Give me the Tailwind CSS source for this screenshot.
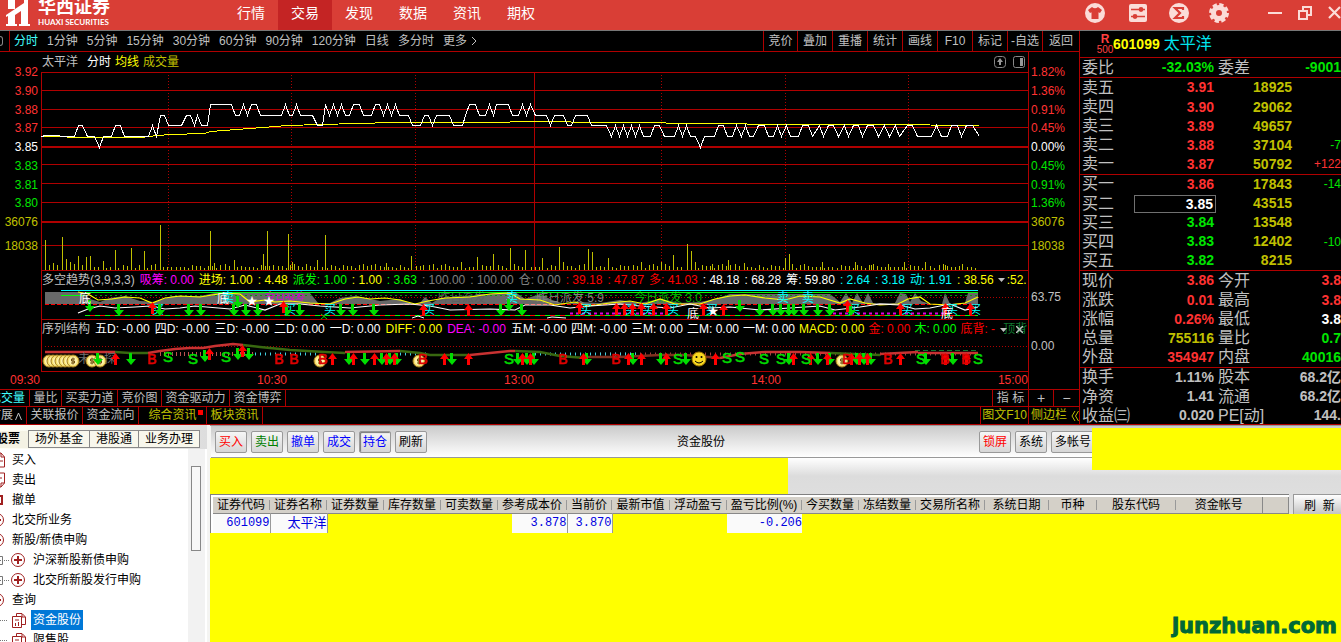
<!DOCTYPE html>
<html lang="zh-CN">
<head>
<meta charset="utf-8">
<title>华西证券</title>
<script src="https://cdn.jsdelivr.net/npm/@tailwindcss/browser@4"></script>
</head>
<body class="flex h-screen flex-col overflow-hidden bg-black font-['Liberation_Sans','Noto_Sans_CJK_SC',sans-serif] text-xs text-[#c0c0c0]">

<!-- title bar -->
<header class="flex h-[31px] shrink-0 items-start overflow-hidden border-b border-[#777] bg-[#d93e36] text-white">
  <div class="flex w-[224px] shrink-0 gap-2 pl-1.5">
    <svg class="h-[26px] w-6" viewBox="0 0 24 26" fill="#fff"><path d="M2 0H9V9L18 3V0H22V24H24V26H13V24H15V11L9 15V24H11V26H0V24H2V16L0 17V15L9 9H2Z"/></svg>
    <div class="-mt-1 flex flex-col">
      <span class="font-['Liberation_Serif','Noto_Sans_CJK_SC',serif] text-lg leading-[22px] font-bold">华西证券</span>
      <span class="font-[Lato,sans-serif] text-[8px] leading-2 font-bold">HUAXI SECURITIES</span>
    </div>
  </div>
  <nav class="flex flex-1 text-sm leading-[27px]">
    <a href="#" class="h-[30px] w-[54px] text-center">行情</a>
    <a href="#" class="h-[30px] w-[54px] bg-[#c42424] text-center">交易</a>
    <a href="#" class="h-[30px] w-[54px] text-center">发现</a>
    <a href="#" class="h-[30px] w-[54px] text-center">数据</a>
    <a href="#" class="h-[30px] w-[54px] text-center">资讯</a>
    <a href="#" class="h-[30px] w-[54px] text-center">期权</a>
  </nav>
  <div class="flex h-[25px] shrink-0 items-center text-[#fbdcd8]">
    <button aria-label="皮肤" class="mr-6 size-5"><svg viewBox="0 0 20 20"><circle cx="10" cy="10" r="10" fill="currentColor"/><path d="M7 4Q10 6.500 13 4L17 7L15 10L13.500 9.300V16H6.500V9.300L5 10L3 7Z" fill="#d93e36"/></svg></button>
    <button aria-label="设置项" class="mr-[22px] size-[18px]"><svg viewBox="0 0 18 18"><rect width="18" height="18" rx="2" fill="currentColor"/><path d="M2 5.500H16M2 12.500H16" stroke="#d93e36" stroke-width="1.500"/><circle cx="12" cy="5.500" r="2.400" fill="#d93e36"/><circle cx="6" cy="12.500" r="2.400" fill="#d93e36"/></svg></button>
    <button aria-label="统计" class="mr-5 size-5"><svg viewBox="0 0 20 20"><circle cx="10" cy="10" r="10" fill="currentColor"/><path d="M14 7V5H6L11 10L6 15H14V13" fill="none" stroke="#d93e36" stroke-width="2.200"/></svg></button>
    <button aria-label="系统设置" class="mr-[39px] size-5"><svg viewBox="0 0 20 20"><circle cx="10" cy="10" r="5.500" fill="none" stroke="currentColor" stroke-width="5"/><circle cx="10" cy="10" r="8" fill="none" stroke="currentColor" stroke-width="4" stroke-dasharray="4 2.283"/></svg></button>
    <button aria-label="最小化" class="mr-4 w-[14px]"><svg viewBox="0 0 14 14"><path d="M0 7H14" stroke="currentColor" stroke-width="2"/></svg></button>
    <button aria-label="还原" class="mr-4 w-[14px]"><svg viewBox="0 0 14 14" fill="none" stroke="currentColor" stroke-width="2"><path d="M1 5H9V13H1ZM5 5V1H13V9H9"/></svg></button>
    <button aria-label="关闭" class="w-[13px]"><svg viewBox="0 0 13 13"><path d="M1 1L12 12M12 1L1 12" stroke="currentColor" stroke-width="2.200"/></svg></button>
  </div>
</header>

<main class="flex h-[394px] shrink-0 overflow-hidden border-b border-[#b00000]">
  <section class="flex min-w-0 flex-1 flex-col">
    <!-- period toolbar -->
    <div class="flex h-[21px] shrink-0 items-stretch border-b border-[#b00000] leading-5 whitespace-nowrap">
      <div class="flex w-[10px] shrink-0 items-center border-r border-[#b00000]"><i class="h-2.5 w-[3px] rounded-r-sm border border-l-0 border-[#888]"></i></div>
      <div class="flex flex-1 gap-[9px] pl-1">
        <button class="text-[#40ffff]">分时</button><button>1分钟</button><button>5分钟</button><button>15分钟</button><button>30分钟</button><button>60分钟</button><button>90分钟</button><button>120分钟</button><button>日线</button><button>多分时</button>
        <button class="flex items-center gap-1">更多<svg class="h-2.5 w-1.5" viewBox="0 0 6 10"><path d="M1 1L5 5L1 9" fill="none" stroke="currentColor"/></svg></button>
      </div>
      <button class="w-[34px] border-l border-[#b00000]">竞价</button><button class="w-[35px] border-l border-[#b00000]">叠加</button><button class="w-[35px] border-l border-[#b00000]">重播</button><button class="w-[35px] border-l border-[#b00000]">统计</button><button class="w-[35px] border-l border-[#b00000]">画线</button><button class="w-[35px] border-l border-[#b00000]">F10</button><button class="w-[35px] border-l border-[#b00000]">标记</button><button class="w-[35px] border-l border-[#b00000]">-自选</button><button class="w-[37px] border-l border-[#b00000]">返回</button>
    </div>

    <!-- price and volume -->
    <div class="flex h-[219px] shrink-0">
      <div class="flex w-[41px] shrink-0 flex-col pr-[3px] text-right leading-[18px]">
        <div class="mt-[11px] flex h-[168px] flex-col justify-between text-[#ff3232]">
          <span>3.92</span><span>3.90</span><span>3.88</span><span>3.87</span><span class="text-white">3.85</span><span class="text-[#00e600]">3.83</span><span class="text-[#00e600]">3.81</span><span class="text-[#00e600]">3.80</span><span class="text-[#c0c000]">36076</span>
        </div>
        <span class="mt-1.5 text-[#c0c000]">18038</span>
      </div>
      <div class="relative min-w-0 flex-1">
        <svg id="price" class="absolute inset-0 h-full w-full" viewBox="41 52 988 219" preserveAspectRatio="none" shape-rendering="crispEdges"></svg>
        <div class="relative flex h-5 items-center pr-1 pl-px">
          <span class="mr-[9px]">太平洋</span><span class="mr-1 text-white">分时</span><span class="mr-1 text-[#ffff00]">均线</span><span class="flex-1 text-[#c0c000]">成交量</span>
          <button aria-label="上移" class="mr-[7px] size-3"><svg viewBox="0 0 12 12"><rect x=".5" y=".5" width="11" height="11" rx="3" fill="none" stroke="#888"/><path d="M6 2L9 6H7V9H5V6H3Z" fill="#999"/></svg></button>
          <button aria-label="侧栏" class="size-3"><svg viewBox="0 0 12 12"><rect x=".5" y=".5" width="11" height="11" rx="2" fill="none" stroke="#888"/><path d="M7 2H10V10H7Z" fill="#999"/></svg></button>
        </div>
      </div>
      <div class="flex w-[50px] shrink-0 flex-col pl-[2px] leading-[18px]">
        <div class="mt-[11px] flex h-[168px] flex-col justify-between text-[#ff3232]">
          <span>1.82%</span><span>1.36%</span><span>0.91%</span><span>0.45%</span><span class="text-white">0.00%</span><span class="text-[#00e600]">0.45%</span><span class="text-[#00e600]">0.91%</span><span class="text-[#00e600]">1.36%</span><span class="text-[#c0c000]">36076</span>
        </div>
        <span class="mt-1.5 text-[#c0c000]">18038</span>
      </div>
    </div>

    <!-- trend indicator -->
    <div class="flex h-[49px] shrink-0">
      <div class="w-[41px] shrink-0"></div>
      <div class="relative min-w-0 flex-1 overflow-hidden">
        <svg id="trend" class="absolute inset-0 h-full w-full" viewBox="41 271 988 49" preserveAspectRatio="none"></svg>
        <div class="relative flex h-[18px] items-center gap-[5px] pl-px whitespace-nowrap">
          <span>多空趋势(3,9,3,3)</span><span class="text-[#ff00ff]">吸筹: 0.00</span><span class="text-[#ffff00]">进场: 1.00</span><span class="text-[#ffff00]">: 4.48</span><span class="text-[#00ff00]">派发: 1.00</span><span class="text-[#ffff00]">: 1.00</span><span class="text-[#00ff00]">: 3.63</span><span class="text-[#808080]">: 100.00</span><span class="text-[#808080]">: 100.00</span><span class="text-[#808080]">仓: 0.00</span><span class="text-[#ff0000]">: 39.18</span><span class="text-[#ff0000]">: 47.87</span><span class="text-[#ff0000]">多: 41.03</span><span class="text-white">: 48.18</span><span class="text-white">: 68.28</span><span class="text-white">筹: 59.80</span><span class="text-[#00ffff]">: 2.64</span><span class="text-[#00ffff]">: 3.18</span><span class="text-[#00ffff]">动: 1.91</span><span class="text-[#ffff00]">: 38.56</span><span class="pl-2 text-[#ffff00]">:52.</span>
        </div>
        <button aria-label="多空趋势菜单" class="absolute top-[7px] right-[24px]"><svg class="h-1 w-[7px]" viewBox="0 0 7 4"><path d="M0 0H7L3.500 4Z" fill="#c0c0c0"/></svg></button>
      </div>
      <div class="w-[50px] shrink-0 pt-[18px] pl-0.5">63.75</div>
    </div>

    <!-- sequence indicator -->
    <div class="flex h-[52px] shrink-0">
      <div class="w-[41px] shrink-0"></div>
      <div class="relative min-w-0 flex-1 overflow-hidden">
        <svg id="seq" class="absolute inset-0 h-full w-full" viewBox="41 320 988 52" preserveAspectRatio="none"></svg>
        <div class="relative flex h-[18px] items-center gap-[5px] pl-px whitespace-nowrap text-white">
          <span class="text-[#c0c0c0]">序列结构</span><span>五D: -0.00</span><span>四D: -0.00</span><span>三D: -0.00</span><span>二D: 0.00</span><span>一D: 0.00</span><span class="text-[#ffff00]">DIFF: 0.00</span><span class="text-[#ff00ff]">DEA: -0.00</span>
          <div class="flex gap-1"><span>五M: -0.00</span><span>四M: -0.00</span><span>三M: 0.00</span><span>二M: 0.00</span><span>一M: 0.00</span><span class="text-[#ffff00]">MACD: 0.00</span><span class="text-[#ff0000]">金: 0.00</span><span class="text-[#00ff00]">木: 0.00</span><span class="text-[#ff0000]">底背: -</span><span class="pl-1 text-[#107830]">顶背</span></div>
        </div>
        <button aria-label="序列结构菜单" class="absolute top-2 right-[22px]"><svg class="h-1 w-[7px]" viewBox="0 0 7 4"><path d="M0 0H7L3.500 4Z" fill="#c0c0c0"/></svg></button>
        <button aria-label="关闭序列结构" class="absolute top-1.5 right-[6px]"><svg class="size-[7px]" viewBox="0 0 7 7"><path d="M0 0L7 7M7 0L0 7" stroke="#c0c0c0" stroke-width="1.500"/></svg></button>
      </div>
      <div class="w-[50px] shrink-0 pt-[18px] pl-0.5">0.00</div>
    </div>

    <!-- time axis -->
    <div class="flex h-[18px] shrink-0 border-b border-[#b00000] leading-4">
      <div class="flex flex-1 justify-between border-r border-[#b00000] pl-[10px] text-[#ff3232]"><span>09:30</span><span>10:30</span><span>13:00</span><span>14:00</span><span>15:00</span></div>
      <div class="w-[50px]"></div>
    </div>

    <!-- indicator tabs -->
    <div class="flex h-[17px] shrink-0 border-b border-[#b00000] leading-4 whitespace-nowrap">
      <button class="flex w-[30px] justify-end overflow-hidden border-r border-[#b00000] pr-1 text-[#40ffff]">成交量</button>
      <button class="w-8 border-r border-[#b00000]">量比</button>
      <button class="w-14 border-r border-[#b00000]">买卖力道</button>
      <button class="w-11 border-r border-[#b00000]">竞价图</button>
      <button class="w-[68px] border-r border-[#b00000]">资金驱动力</button>
      <button class="w-14 border-r border-[#b00000]">资金博弈</button>
      <span class="flex-1"></span>
      <button class="w-[37px] border-x border-[#b00000]">指 标</button>
      <button class="w-[25px] border-r border-[#b00000] text-sm leading-4">+</button>
      <button class="w-[25px] text-sm leading-4">−</button>
    </div>
    <div class="flex h-[17px] shrink-0 leading-[17px] whitespace-nowrap">
      <button class="flex w-[27px] items-center justify-end gap-0.5 overflow-hidden border-r border-[#b00000] pr-1">扩展<svg class="h-2 w-[7px] shrink-0" viewBox="0 0 7 8"><path d="M.5 8L3.500 1L6.500 8" fill="none" stroke="currentColor"/></svg></button>
      <button class="w-14 border-r border-[#b00000]">关联报价</button>
      <button class="w-14 border-r border-[#b00000]">资金流向</button>
      <button class="relative w-[68px] border-r border-[#b00000] text-[#c0c000]">综合资讯<i class="absolute top-[3px] right-[3px] size-[5px] bg-[#ff0000]"></i></button>
      <button class="w-14 border-r border-[#b00000] text-[#c0c000]">板块资讯</button>
      <span class="flex-1"></span>
      <button class="w-[49px] border-x border-[#b00000] text-[#c0c000]">图文F10</button>
      <button class="flex w-[50px] items-center gap-1 pl-0.5 text-[#c0c000]">侧边栏<svg class="h-2.5 w-2" viewBox="0 0 8 10"><path d="M4 0L1 5L4 10M7.500 0L4.500 5L7.500 10" fill="none" stroke="currentColor"/></svg></button>
    </div>
  </section>

  <!-- quote panel -->
  <aside class="flex w-[262px] shrink-0 flex-col overflow-hidden border-l border-[#b00000] text-base whitespace-nowrap">
    <h1 class="flex h-[27px] shrink-0 items-center border-b border-[#b00000] pl-[17px] text-[#00e5ee]">
      <span class="flex w-4 flex-col items-center text-xs leading-[11px] text-[#ff4040]"><b>R</b><span class="text-[10px] leading-[9px]">500</span></span>
      <b class="mr-1 text-sm text-[#ffff00]">601099</b>太平洋
    </h1>
    <table class="w-full table-fixed leading-[19px] [&_b]:block [&_b]:text-sm [&_b]:leading-[19px] [&_tbody+tbody_tr:first-child>td]:h-5 [&_td]:h-[19px] [&_td]:text-right [&_td:nth-child(2)_b]:pr-0.5 [&_th]:pl-0.5 [&_th]:text-left [&_th]:leading-[18px] [&_th]:font-normal">
      <colgroup><col class="w-[54px]"><col class="w-[82px]"><col class="w-[76px]"><col></colgroup>
      <tbody class="border-b border-[#b00000] text-[#00e600]">
        <tr><th class="text-[#c0c0c0]">委比</th><td><b>-32.03%</b></td><th class="text-[#c0c0c0]">委差</th><td><b>-9001</b></td></tr>
      </tbody>
      <tbody class="border-b border-[#b00000] text-[#c0c000]" id="asks"></tbody>
      <tbody class="border-b border-[#b00000] text-[#c0c000]" id="bids"></tbody>
      <tbody class="border-b border-[#b00000] text-[#ff3232]" id="stats"></tbody>
      <tbody id="basics"></tbody>
    </table>
  </aside>
</main>

<!-- trading desk -->
<div class="flex min-h-0 flex-1 bg-[#f4f4f2] text-black">
  <nav class="flex w-[207px] shrink-0 flex-col overflow-hidden">
    <div class="flex h-6 shrink-0 items-end bg-linear-to-r from-[#fffff4] to-[#ddd] pt-1.5 pb-px whitespace-nowrap">
      <button class="flex h-[17px] w-7 justify-end overflow-hidden bg-[#f4f2e4] pr-2 font-bold">股票</button>
      <button class="h-[18px] w-[62px] border border-[#888] bg-[#f8f7ec] leading-4">场外基金</button>
      <button class="h-[18px] w-[49px] border border-l-0 border-[#888] bg-[#f8f7ec] leading-4">港股通</button>
      <button class="h-[18px] w-[61px] border border-l-0 border-[#888] bg-[#f8f7ec] leading-4">业务办理</button>
    </div>
    <div class="flex flex-1 bg-white">
      <ul class="flex-1 pt-px leading-5 [&>li]:flex [&>li]:h-5 [&>li]:items-center">
        <li><svg class="mr-[7px] h-4 w-[5px]" viewBox="0 0 5 16" fill="none" stroke="#a02020"><path d="M0 1H1L4.500 5V15H0M1 1V5H4.500M0 9H3"/></svg><a href="#">买入</a></li>
        <li><svg class="mr-[7px] h-4 w-[5px]" viewBox="0 0 5 16" fill="none" stroke="#a02020"><path d="M0 1H4.500V11L1 15H0M1 15V11H4.500M0 6H2"/></svg><a href="#">卖出</a></li>
        <li><svg class="mr-[7px] h-4 w-[5px]" viewBox="0 0 5 16" fill="none" stroke="#a02020" stroke-width="2"><path d="M0 4H2V12H0"/></svg><a href="#">撤单</a></li>
        <li><svg class="mr-[7px] h-4 w-[5px]" viewBox="0 0 5 16" fill="none" stroke="#a02020"><circle cx="-3" cy="8" r="6.500"/><path d="M0 8H1" stroke-width="2"/></svg><a href="#">北交所业务</a></li>
        <li><svg class="mr-[7px] h-4 w-[5px]" viewBox="0 0 5 16" fill="none" stroke="#a02020"><circle cx="-3" cy="8" r="6.500"/><path d="M0 8H1" stroke-width="2"/></svg><a href="#">新股/新债申购</a></li>
        <li><svg class="mr-2 h-4 w-[25px]" viewBox="0 0 25 16" fill="none" stroke="#a02020"><path d="M0 4.500H2.500V12.500H0M0 8.500H1" stroke="#777"/><path d="M4 8.500H9" stroke="#777" stroke-dasharray="1 1"/><circle cx="18" cy="8" r="6.500"/><path d="M14 8H22M18 4V12" stroke-width="2"/></svg><a href="#">沪深新股新债申购</a></li>
        <li><svg class="mr-2 h-4 w-[25px]" viewBox="0 0 25 16" fill="none" stroke="#a02020"><path d="M0 4.500H2.500V12.500H0M0 8.500H1" stroke="#777"/><path d="M4 8.500H9" stroke="#777" stroke-dasharray="1 1"/><circle cx="18" cy="8" r="6.500"/><path d="M14 8H22M18 4V12" stroke-width="2"/></svg><a href="#">北交所新股发行申购</a></li>
        <li><svg class="mr-[7px] h-4 w-[5px]" viewBox="0 0 5 16" fill="none" stroke="#a02020"><circle cx="-3" cy="8" r="6.500"/><path d="M0 8H1" stroke-width="2"/></svg><a href="#">查询</a></li>
        <li><svg class="mr-[5px] h-4 w-[26px]" viewBox="0 0 26 16" fill="none" stroke="#a02020"><path d="M0 8.500H7" stroke="#777" stroke-dasharray="1 1"/><path d="M12.500 4.500H21.500V15.500H12.500ZM16.500 4V1.500H22L25.500 5V12.500H22M22 2V5H25M15.500 11V14M18.500 10V14M15 8H19"/></svg><a href="#" class="bg-[#0078d7] px-0.5 text-white">资金股份</a></li>
        <li><svg class="mr-[7px] h-4 w-[26px]" viewBox="0 0 26 16" fill="none" stroke="#a02020"><path d="M0 8.500H7" stroke="#777" stroke-dasharray="1 1"/><path d="M12.500 4.500H21.500V15.500H12.500ZM16.500 4V1.500H22L25.500 5V12.500H22M22 2V5H25M15.500 11V14M18.500 10V14M15 8H19"/></svg><a href="#">限售股</a></li>
      </ul>
      <div class="mr-0.5 w-[17px] bg-[#f2f2f2] px-[3px] pt-[17px]"><div class="h-[85px] w-[10px] border border-[#888] bg-[#f8f8f8]"></div></div>
    </div>
  </nav>

  <section class="relative ml-[3px] flex min-w-0 flex-1 flex-col overflow-hidden border-t border-[#999]">
    <div class="ml-px grid h-8 shrink-0 grid-cols-[3fr_auto_4fr] items-center border-b border-[#999] bg-linear-to-b from-[#cbcbcb] to-white pl-1">
      <div class="flex gap-1 [&>button]:h-[22px] [&>button]:w-8 [&>button]:rounded-xs [&>button]:border [&>button]:border-[#999] [&>button]:bg-linear-to-b [&>button]:from-[#f6f6f6] [&>button]:to-[#d6d6d6] [&>button]:whitespace-nowrap">
        <button class="text-[#ff0000]">买入</button><button class="text-[#008000]">卖出</button><button class="text-[#0000ff]">撤单</button><button class="text-[#0000ff]">成交</button><button class="text-[#0000ff] shadow-[inset_1px_1px_1px_#777]">持仓</button><button>刷新</button>
      </div>
      <h2>资金股份</h2>
      <div class="flex justify-end gap-1 pr-[246px] [&>button]:h-[22px] [&>button]:w-8 [&>button]:rounded-xs [&>button]:border [&>button]:border-[#999] [&>button]:bg-linear-to-b [&>button]:from-[#f6f6f6] [&>button]:to-[#d6d6d6] [&>button]:whitespace-nowrap">
        <button class="text-[#ff0000]">锁屏</button><button>系统</button><button class="min-w-11">多帐号</button>
      </div>
    </div>
    <div class="flex h-9 shrink-0 bg-linear-to-b from-white via-[#dcdcdc] to-[#dedede]"><div class="w-[578px] bg-[#ffff00]"></div></div>
    <div class="flex min-h-0 flex-1 items-start bg-[#ffff00]">
      <div class="min-w-0 flex-1 border-t border-l border-[#808080] bg-white pt-0.5 pl-0.5">
        <table class="w-full table-fixed whitespace-nowrap">
          <colgroup><col class="w-[57px]"><col class="w-[57px]"><col class="w-[57px]"><col class="w-[57px]"><col class="w-[57px]"><col class="w-[69px]"><col class="w-[45px]"><col class="w-[58px]"><col class="w-[57px]"><col class="w-[75px]"><col class="w-[57px]"><col class="w-[57px]"><col class="w-[69px]"><col class="w-[64px]"><col class="w-[48px]"><col class="w-[79px]"><col class="w-[86px]"><col></colgroup>
          <thead class="border-b border-[#888] bg-[#d4d0c8] leading-4 [&_span]:block [&_span]:h-2.5 [&_span]:border-r [&_span]:border-[#999] [&_span]:leading-[10px] [&_th]:p-0 [&_th]:font-normal">
            <tr class="h-4"><th><span>证券代码</span></th><th><span>证券名称</span></th><th><span>证券数量</span></th><th><span>库存数量</span></th><th><span>可卖数量</span></th><th><span>参考成本价</span></th><th><span>当前价</span></th><th><span>最新市值</span></th><th><span>浮动盈亏</span></th><th><span>盈亏比例(%)</span></th><th><span>今买数量</span></th><th><span>冻结数量</span></th><th><span>交易所名称</span></th><th><span>系统日期</span></th><th><span>币种</span></th><th><span>股东代码</span></th><th class="border-r border-[#888]">资金帐号</th><th class="border-r border-[#888]"></th></tr>
          </thead>
          <tbody class="bg-[#ffff00] font-['Liberation_Mono','Noto_Sans_CJK_SC',monospace] text-[#0000e0]">
            <tr class="h-[19px] text-right leading-[19px]"><td class="border-r border-[#999] bg-[#fafafa]">601099</td><td class="border-r border-[#999] bg-[#fafafa] text-[13px]">太平洋</td><td></td><td></td><td></td><td class="border-r border-[#999]"><span class="ml-3.5 block bg-[#fafafa]">3.878</span></td><td class="border-r border-[#999] bg-[#fafafa]">3.870</td><td></td><td></td><td class="bg-[#fafafa]">-0.206</td><td></td><td></td><td></td><td></td><td></td><td></td><td></td><td></td></tr>
          </tbody>
        </table>
      </div>
      <div class="h-5 w-[52px] shrink-0 overflow-hidden bg-[#dedede] pl-1"><button class="h-6 w-[60px] border border-[#999] bg-linear-to-b from-white to-[#bbb] pl-2.5 text-left whitespace-pre">刷  新</button></div>
    </div>
    <div class="absolute top-0.5 right-0 h-[42px] w-[249px] bg-[#ffff00]"></div>
    <a href="#" class="absolute right-1 bottom-1 font-['DejaVu_Sans',sans-serif] text-[21px] leading-6 font-bold text-[#006838] [-webkit-text-stroke:1px_#006838]">junzhuan.com</a>
  </section>
</div>

<script>
const $ = id => document.getElementById(id);
const RED = '#b00000';
const line = (x1, y1, x2, y2, c = RED, w = 1, extra = '') => `<line x1="${x1}" y1="${y1}" x2="${x2}" y2="${y2}" stroke="${c}" stroke-width="${w}" ${extra}/>`;
const poly = (p, c, w = 1, extra = '') => `<polyline points="${p}" fill="none" stroke="${c}" stroke-width="${w}" ${extra}/>`;

/* price grid */
let s = '';
[72, 90, 109, 127, 164, 183, 202, 245, 270].forEach(y => s += line(41, y + .5, 1029, y + .5));
[147, 222].forEach(y => s += line(41, y, 1029, y, RED, 2));
s += line(41.5, 72, 41.5, 271) + line(534.5, 72, 534.5, 271) + line(1028.5, 52, 1028.5, 271);
[168, 291, 415, 661, 785, 908].forEach(x => s += line(x + .5, 75, x + .5, 270, RED, 1, 'stroke-dasharray="1 2"'));

/* volume bars */
const tall = {45:240,49:265,53:263,57:265,62:237,66:259,70:262,78:256,86:257,90:256,103:261,115:250,131:248,144:251,160:225,210:231,214:263,234:260,263:254,267:231,288:234,292:262,317:260,325:235,386:263,411:256,423:265,461:262,477:257,493:254,510:248,525:250,542:258,559:247,563:262,588:249,592:252,608:258,641:262,661:262,673:255,687:244,691:251,695:262,712:264,728:260,744:263,785:258,789:254,822:262,855:262,871:265,888:264,904:262,925:262,945:265,962:264};
const vols = {...tall};
for (let i = 0; i < 229; i++) { const x = Math.round(45 + i * 4.08); if (!vols[x] && !vols[x - 1] && !vols[x + 1]) vols[x] = 270 - [3, 4, 2, 5, 3, 6, 4, 2, 3, 5, 4][(i * 7 + (i >> 3)) % 11]; }
for (const x in vols) s += line(+x + .5, vols[x], +x + .5, 270, '#c0c000');

s += '<g transform="translate(.5 .5)">';
s += poly('41,136 90,137 140,137 157,135 170,134 204,133 210,131 236,129 262,127 287,125 320,124 393,122 480,122 540,121 600,122 640,122 690,123 800,124 880,124 979,125', '#ffff00', 1);
s += poly('41,136 45,135 74,136 78,125 82,125 87,136 94,136 99,147 103,136 111,136 115,125 120,125 124,136 148,136 152,125 156,136 160,115 164,115 168,125 181,125 186,115 190,115 194,125 197,115 201,125 207,125 210,104 231,104 235,115 239,115 243,104 247,115 251,104 256,104 260,115 281,115 285,104 289,115 292,115 296,104 300,115 312,115 317,125 322,125 325,104 329,115 333,104 337,115 341,104 345,115 349,115 353,104 359,104 363,115 371,115 375,104 379,104 383,115 387,104 391,115 395,104 399,115 408,115 412,125 420,125 424,115 428,115 432,125 436,115 449,115 453,125 462,125 465,115 469,104 475,104 479,115 485,115 489,104 493,115 496,104 508,104 512,115 518,115 522,104 526,115 530,104 535,115 546,115 550,125 554,115 563,115 567,125 571,125 575,115 587,115 591,125 606,125 611,136 615,125 619,136 623,125 627,136 631,125 635,136 639,125 643,136 650,136 654,125 659,125 664,136 674,136 678,125 682,136 686,125 690,136 695,136 700,147 704,136 714,136 718,125 723,125 727,136 732,136 736,125 741,136 745,125 749,136 753,136 758,125 764,125 768,136 773,136 777,125 781,136 786,125 790,136 798,136 802,125 808,125 812,136 819,125 823,136 828,125 833,125 838,136 844,125 848,136 853,125 858,125 862,136 867,125 873,125 878,136 884,125 889,136 895,125 899,136 907,125 912,125 917,136 931,136 936,125 941,136 947,136 951,125 957,125 961,136 966,125 972,125 979,136', '#ffffff');
$('price').innerHTML = s + '</g>';

/* signal glyphs */
const down = (x, y) => `<path d="M${x - 2} ${y - 6}h3v6h4l-5 6l-5 -6h3z" fill="#00dd00"/>`;
const up = (x, y) => `<path d="M${x - 1} ${y + 6}h3v-6h3l-4.500 -6l-4.500 6h3z" fill="#ff0000"/>`;
const label = (t, x, y, c, size = 12, extra = '') => `<text x="${x}" y="${y}" fill="${c}" font-size="${size}" text-anchor="middle" ${extra}>${t}</text>`;
const star = (x, y) => label('★', x, y + 4, '#fff', 11);
const coin = (x, y) => `<circle cx="${x}" cy="${y}" r="6" fill="#f5e070" stroke="#a88020"/><circle cx="${x}" cy="${y}" r="4" fill="#fff3b0"/><path d="M${x + 2} ${y - 2}h-3.500v2h3v2h-3.500M${x} ${y - 3.5}v7" fill="none" stroke="#705010"/>`;

/* trend pane */
s = line(41.5, 271, 41.5, 320) + line(1028.5, 271, 1028.5, 320) + line(41, 319.5, 1029, 319.5);
s += line(45, 297.5, 1029, 297.5, '#b00000', 1, 'stroke-dasharray="1 2"');
s += '<path d="M45 292H83L90 299L100 302L110 298L125 296L140 301L155 302L172 296L200 296L215 293H310L318 303L330 303L340 298L355 296L380 301L400 299L412 304L420 303L425 297L432 303L440 298L455 297L480 295L500 293L515 292L525 299L540 294L552 300L565 304L580 302L600 303L620 300L640 303L660 299L680 303L700 302L715 299L730 294H830L840 302L846 293L852 303L857 293L863 303L868 293L873 303L895 303L900 293L906 294L910 302L915 293L921 301L930 304L942 304L945 293L950 304L965 303L968 293H978V304H45Z" fill="#686868"/>';
s += label('昨日派发', 462, 302, '#606060') + label('昨日派发 5.9', 570, 302, '#808080') + label('今日派发 3.0', 668, 302, '#00b000') + label('今日吸筹', 285, 300, '#d000d0', 10);
s += line(61, 290.5, 978, 290.5, '#00ffff') + line(61, 295.5, 85, 295.5, '#00ff00') + line(85, 292.5, 978, 292.5, '#00ff00') + line(85, 295.5, 978, 295.5, '#00a000', 1, 'stroke-dasharray="2 3"');
s += line(45, 304.5, 978, 304.5, '#ff0000', 1, 'stroke-dasharray="4 2"') + line(85, 315.5, 978, 315.5, '#00ff00', 1, 'stroke-dasharray="5 5"') + line(90, 315.5, 978, 315.5, '#ff0000', 1, 'stroke-dasharray="5 5"');
[[570, 665], [833, 950]].forEach(([a, b]) => s += line(a, 313.5, b, 313.5, '#e000e0', 2, 'stroke-dasharray="3 3"'));
s += poly('78,292 88,294 98,300 112,299 125,297 140,298 152,303 165,298 180,296 200,297 212,295 225,293 240,294 250,302 265,300 275,302 290,301 310,303 330,304 345,299 358,297 370,299 385,298 400,300 415,304 428,301 445,298 470,297 490,294 510,293 520,299 540,300 555,305 575,302 588,306 610,303 630,301 645,304 660,299 675,304 700,304 715,299 730,296 745,295 765,298 785,300 800,296 820,297 840,303 850,299 865,303 880,305 898,304 908,299 920,297 930,304 948,305 965,303 978,297', '#ffff00', 1.2);
s += poly('78,313 88,309 100,306 115,308 135,307 150,306 165,309 180,308 195,306 230,309 245,305 265,310 280,304 300,304 320,306 350,308 380,305 410,304 430,306 450,310 490,309 515,310 525,305 550,305 570,308 590,306 620,304 640,306 670,308 690,304 710,308 730,307 760,310 790,308 820,306 835,310 860,307 880,304 900,305 915,309 930,308 950,304 965,310 978,307', '#ffffff', 1.2);
s += poly('412,318 418,316 424,318', '#fff') + poly('547,318 552,317 566,318', '#fff');
[158, 290, 330, 429, 586, 631, 648, 673, 712, 854, 907, 952, 975].forEach(x => s += label('买', x, 314, '#00ffff'));
[228, 512, 783, 808].forEach(x => s += label('卖', x, 302, '#00ffff'));
[[90,306],[119,310],[160,310],[189,310],[201,310],[234,310],[238,302],[246,310],[258,310],[287,310],[300,310],[341,310],[353,310],[374,310],[501,310],[509,305],[522,310],[740,306],[760,310],[773,310],[781,310],[789,310],[794,310],[804,310],[818,310],[830,310],[851,310]].forEach(p => s += down(...p));
[[152,308],[283,307],[423,310],[468,310],[579,308],[616,309],[624,309],[632,309],[641,309],[653,309],[666,309],[703,309],[723,310],[847,306],[900,309],[945,309],[970,309]].forEach(p => s += up(...p));
[[85, 303], [223, 303], [693, 318], [947, 318]].forEach(([x, y]) => s += label('底', x, y, '#fff'));
s += star(252, 301) + star(269, 301) + star(713, 311) + '<path d="M321 314l6 5M327 314l-6 5" stroke="#00dd00"/>';
$('trend').innerHTML = s;

/* sequence pane */
s = line(41.5, 320, 41.5, 372) + line(1028.5, 320, 1028.5, 372) + line(41, 371.5, 1029, 371.5);
s += line(45, 346.5, 1029, 346.5, RED, 1, 'stroke-dasharray="1 2"') + line(160, 354, 255, 354, '#c05050', 4, 'stroke-dasharray="1 3"') + line(600, 354, 978, 354, '#a04040', 3, 'stroke-dasharray="1 4"') + line(255, 354, 320, 354, '#40d0e0', 3, 'stroke-dasharray="1 4"') + line(400, 354, 430, 354, '#40d0e0', 3, 'stroke-dasharray="1 4"') + line(535, 354, 640, 354, '#40d0e0', 3, 'stroke-dasharray="1 4"');
s += line(915, 350.5, 978, 350.5, '#107830', 1, 'stroke-dasharray="5 3"');
[['45,352 115,352', '#c83232'], ['115,352 130,353 148,353', '#386810'], ['148,353 160,351 175,349 190,348 203,348 215,346 233,344 243,345', '#c83232'], ['243,345 260,347 290,350 325,352 345,353', '#386810'], ['345,352 400,351', '#c83232'], ['400,351 420,353 430,355 470,355', '#386810'], ['470,355 490,353 510,351 515,351', '#c83232'], ['515,351 540,352 560,356 585,358', '#386810'], ['585,357 620,357 660,355 685,355 720,358', '#803020'], ['720,358 740,354 765,352 800,352 830,353', '#c83232'], ['830,353 880,355', '#386810'], ['880,354 918,352', '#c83232'], ['918,353 978,353', '#c83232']].forEach(([p, c]) => s += poly(p, c, 2.5));
s += label('未', 84, 363, '#707070') + label('探', 110, 363, '#707070');
[49, 53, 57, 61, 65, 69, 73, 92, 100, 320, 419, 842].forEach(x => s += coin(x, 361));
[[98,359],[131,359],[205,356],[238,354],[249,354],[349,359],[365,359],[382,359],[390,359],[397,359],[452,359],[518,359],[527,359],[534,359],[587,359],[633,359],[661,359],[686,359],[789,359],[818,359],[830,359],[857,359],[864,359],[871,359],[926,359],[953,359]].forEach(p => s += down(...p));
[[115,359],[209,354],[242,351],[332,359],[353,359],[374,359],[386,359],[394,359],[444,359],[468,359],[522,359],[530,359],[583,359],[628,359],[641,359],[666,359],[715,359],[793,359],[810,359],[827,359],[851,359],[859,359],[867,359],[900,359],[945,359],[966,359]].forEach(p => s += up(...p));
[[168,361],[193,363],[226,361],[509,363],[678,363],[727,362],[740,361],[764,363],[781,363],[806,363],[921,363],[978,363]].forEach(([x, y]) => s += label('S', x, y + 1, '#00dd00', 15, 'stroke="#00dd00" stroke-width=".6"'));
[152, 279, 294, 323, 423, 563, 616, 847, 888, 945, 966].forEach(x => s += label('B', x, 364, '#e00000', 14, 'stroke="#e00000" stroke-width=".6"'));
s += '<circle cx="699" cy="359" r="7" fill="#f8d820" stroke="#a07800"/><circle cx="696.500" cy="357" r="1"/><circle cx="701.500" cy="357" r="1"/><path d="M695 361Q699 365 703 361" fill="none" stroke="#000"/>';
$('seq').innerHTML = s;

/* quote rows: label, price, colour, quantity, change */
const book = rows => rows.map(([n, p, c, q, d, dc, box]) => `<tr><th class="text-[#c0c0c0]">${n}</th><td class="${c}"><b class="${box ? 'border border-[#707070] leading-[16px]!' : ''}">${p}</b></td><td><b>${q}</b></td><td class="text-xs ${dc}">${d}</td></tr>`).join('');
$('asks').innerHTML = book([['卖五','3.91','text-[#ff3232]','18925','',''],['卖四','3.90','text-[#ff3232]','29062','',''],['卖三','3.89','text-[#ff3232]','49657','',''],['卖二','3.88','text-[#ff3232]','37104','-7','text-[#00e600]'],['卖一','3.87','text-[#ff3232]','50792','+122','text-[#ff3232]']]);
$('bids').innerHTML = book([['买一','3.86','text-[#ff3232]','17843','-14','text-[#00e600]'],['买二','3.85','text-white','43515','','',true],['买三','3.84','text-[#00e600]','13548','',''],['买四','3.83','text-[#00e600]','12402','-10','text-[#00e600]'],['买五','3.82','text-[#00e600]','8215','','']]);
const pairs = rows => rows.map(([a, v, c, b, w, d]) => `<tr><th class="text-[#c0c0c0]">${a}</th><td class="${c}"><b>${v}</b></td><th class="text-[#c0c0c0]">${b}</th><td class="${d}"><b>${w}</b></td></tr>`).join('');
$('stats').innerHTML = pairs([['现价','3.86','','今开','3.8',''],['涨跌','0.01','','最高','3.8',''],['涨幅','0.26%','','最低','3.8','text-white'],['总量','755116','text-[#c0c000]','量比','0.7','text-[#00e600]'],['外盘','354947','','内盘','40016','text-[#00e600]']]);
$('basics').innerHTML = pairs([['换手','1.11%','','股本','68.2亿',''],['净资','1.41','','流通','68.2亿',''],['收益㈢','0.020','','PE[动]','144.','']]);
</script>
</body>
</html>
